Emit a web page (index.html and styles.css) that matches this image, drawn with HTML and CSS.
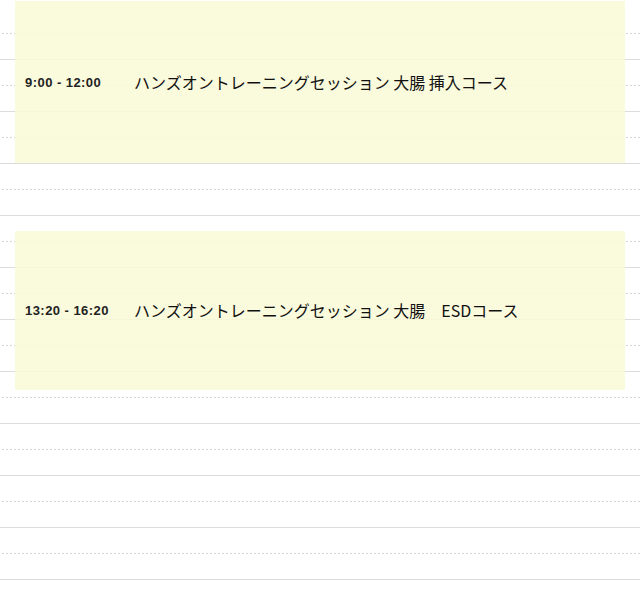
FILE: index.html
```html
<!DOCTYPE html>
<html lang="ja">
<head>
<meta charset="utf-8">
<title>スケジュール</title>
<link rel="stylesheet" href="styles.css">
</head>
<body>
<div class="timetable">
  <div class="grid">
    <div class="row row-first dashed"></div>
    <div class="row solid"></div>
    <div class="row dashed"></div>
    <div class="row solid"></div>
    <div class="row dashed"></div>
    <div class="row solid"></div>
    <div class="row dashed"></div>
    <div class="row solid"></div>
    <div class="row dashed"></div>
    <div class="row solid"></div>
    <div class="row dashed"></div>
    <div class="row solid"></div>
    <div class="row dashed"></div>
    <div class="row solid"></div>
    <div class="row dashed"></div>
    <div class="row solid"></div>
    <div class="row dashed"></div>
    <div class="row solid"></div>
    <div class="row dashed"></div>
    <div class="row solid"></div>
    <div class="row dashed"></div>
    <div class="row solid"></div>
  </div>
  <div class="event event-1">
    <span class="time">9:00 - 12:00</span>
    <span class="title">ハンズオントレーニングセッション 大腸 挿入コース</span>
  </div>
  <div class="event event-2">
    <span class="time">13:20 - 16:20</span>
    <span class="title">ハンズオントレーニングセッション 大腸　ESDコース</span>
  </div>
</div>
</body>
</html>
```
FILE: styles.css
```css
html, body {
  margin: 0;
  padding: 0;
  background: #fff;
}

.timetable {
  position: relative;
  width: 640px;
  height: 605px;
  overflow: hidden;
}

.grid {
  display: flex;
  flex-direction: column;
}

.row {
  height: 26px;
  box-sizing: border-box;
}

.row-first {
  height: 34px;
}

.solid {
  border-bottom: 1px solid #dcdcdc;
}

.dashed {
  background-image: linear-gradient(to right, #d6d6d6 50%, transparent 50%);
  background-size: 4px 1px;
  background-repeat: repeat-x;
  background-position: 2px 100%;
}

.event {
  position: absolute;
  left: 15px;
  width: 610px;
  display: flex;
  align-items: center;
  box-sizing: border-box;
  padding-left: 10px;
  background: rgba(249, 249, 214, 0.86);
}

.event-1 {
  top: 1px;
  height: 162px;
}

.event-2 {
  top: 231px;
  height: 159px;
}

.time {
  width: 109px;
  flex: none;
  font-family: "Liberation Sans", Arial, sans-serif;
  font-weight: bold;
  font-size: 13px;
  letter-spacing: 0.45px;
  color: #222;
}

.title {
  font-family: "Noto Sans CJK JP", "Liberation Sans", sans-serif;
  font-size: 16px;
  color: #111;
  margin-top: -1px;
}
```
